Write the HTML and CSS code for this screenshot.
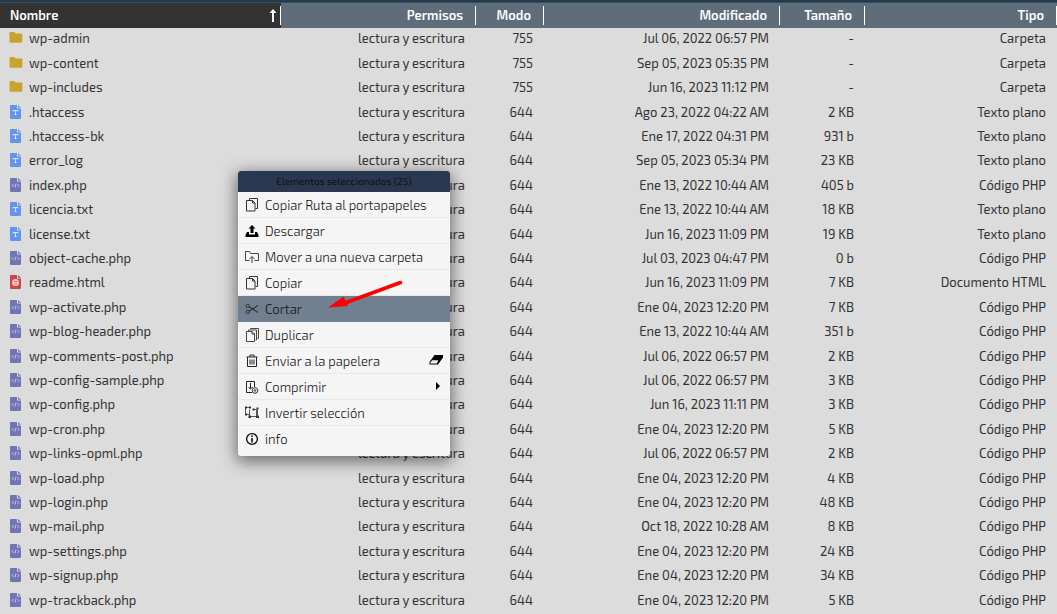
FILE: index.html
```html
<!DOCTYPE html>
<html lang="es">
<head>
<meta charset="utf-8">
<meta name="viewport" content="width=device-width, initial-scale=1">
<title>Administrador de archivos</title>
<link rel="stylesheet" href="styles.css">
</head>
<body>
<svg class="sprite" aria-hidden="true">
  <symbol id="folder" viewBox="0 0 14 14"><path fill="#c8a32e" d="M1.300 1h4l1.500 1.500h5.700q.8 0 .8.8V11q0 .8-.8.8H1.300q-.8 0-.8-.8V1.800q0-.8.8-.8z"/></symbol>
  <symbol id="text" viewBox="0 0 14 14"><path fill="#6495ed" d="M2 0h6v3.500h4V13q0 1-1 1H2q-1 0-1-1V1q0-1 1-1zM9 0l3 2.700H9z"/><path d="M4 6.500V5.500h5v1M6.500 5.500v4M5.500 9.500h2" fill="none" stroke="#dce8fb"/></symbol>
  <symbol id="code" viewBox="0 0 14 14"><path fill="#7175b5" d="M2 0h6v3.500h4V13q0 1-1 1H2q-1 0-1-1V1q0-1 1-1zM9 0l3 2.700H9z"/><path d="M4.500 6L3 7.500 4.500 9M8.500 6L10 7.500 8.500 9M7 5.500l-1 4" fill="none" stroke="#d3d4ea" stroke-width=".8"/></symbol>
  <symbol id="html" viewBox="0 0 14 14"><path fill="#c9474b" d="M2 0h6v3.500h4V13q0 1-1 1H2q-1 0-1-1V1q0-1 1-1zM9 0l3 2.700H9z"/><circle cx="6.500" cy="7.500" r="3.500" fill="#f1cfd0"/><path d="M4.500 6.500h4M5 9h3" fill="none" stroke="#c9474b" stroke-width=".7"/></symbol>
  <symbol id="copy" viewBox="0 0 14 14"><path d="M4.500 2V.5h8v10h-2M1.500 2.500h6l2.500 2.500v8h-8.500zM7.500 2.500V5H10" fill="none" stroke="#333"/></symbol>
  <symbol id="download" viewBox="0 0 14 14"><path d="M7 1l3.500 3.500h-2V9h-3V4.500h-2zM2 8h2v2.500h6V8h2l1.500 3v2H.5v-2z"/></symbol>
  <symbol id="move" viewBox="0 0 14 14"><path d="M4.500 10.500h-4v-9h4l1 2h8v7h-4M7 13V6.500M4.500 9L7 6.500 9.500 9" fill="none" stroke="#444"/></symbol>
  <symbol id="cut" viewBox="0 0 14 14"><g fill="none" stroke="#333"><circle cx="2.700" cy="4" r="1.700"/><circle cx="2.700" cy="10" r="1.700"/><path d="M4.200 4.800L13 10.500M4.200 9.200L13 3.500" stroke-width="1.200"/></g></symbol>
  <symbol id="duplicate" viewBox="0 0 14 14"><path d="M5.500 1V.5h8v10h-1M3.500 3V2h8v10h-1M1.500 3.500h5.500l2.500 2.500v7.500h-8zM7 3.500V6h2.500" fill="none" stroke="#333" stroke-width=".9"/></symbol>
  <symbol id="trash" viewBox="0 0 14 14"><path d="M1.500 3h11M5 3V1h4v2M2.500 3v9.500h9V3M5 5.500v5M7 5.500v5M9 5.500v5" fill="none" stroke="#222"/></symbol>
  <symbol id="compress" viewBox="0 0 14 14"><path d="M7 12.500H1.500V1.500h8V7M5.500 3v6M3.500 7l2 2 2-2" fill="none" stroke="#222"/><circle cx="10" cy="10.500" r="2.800" fill="#f5f5f5" stroke="#333"/><path d="M8.500 10.500h3M10 9v3" stroke="#333" stroke-width=".8"/></symbol>
  <symbol id="invert" viewBox="0 0 14 14"><path d="M.5 2v6.500H4M4.500 3.500v7h7v-7H9M12.500 3.500v6M1.500 1.500h3" fill="none" stroke="#444" stroke-width=".9"/><path d="M0 .5h2v2H0zM0 7.500h2v2H0zM4 .5h2v2H4zM7.500 2.500h2v2h-2zM11.500 1.500h2v2h-2zM11 9.500h3v2.500h-3zM3.500 9.500h2.500V12H3.500z" fill="#333"/></symbol>
  <symbol id="info" viewBox="0 0 14 14"><circle cx="7" cy="7" r="5.400" fill="none" stroke="#111" stroke-width="1.400"/><path d="M7 3.500v1.500M7 6v4.500" stroke="#111" stroke-width="1.600"/></symbol>
</svg>
<main class="manager">
  <table class="files">
    <colgroup><col class="col-name"><col class="col-perm"><col class="col-mode"><col class="col-date"><col class="col-size"><col></colgroup>
    <thead><tr>
      <th class="sorted" aria-sort="ascending"><button type="button">Nombre<svg class="sort" viewBox="0 0 8 14" aria-hidden="true"><path d="M4 0l3.500 4H5v9H3V4H.5z" fill="#fff"/></svg></button></th>
      <th><button type="button">Permisos</button></th><th><button type="button">Modo</button></th><th><button type="button">Modificado</button></th><th><button type="button">Tamaño</button></th><th><button type="button">Tipo</button></th>
    </tr></thead>
    <tbody>
      <tr><td><span class="file"><svg><use href="#folder"/></svg>wp-admin</span></td><td>lectura y escritura</td><td>755</td><td>Jul 06, 2022 06:57 PM</td><td>-</td><td>Carpeta</td></tr>
      <tr><td><span class="file"><svg><use href="#folder"/></svg>wp-content</span></td><td>lectura y escritura</td><td>755</td><td>Sep 05, 2023 05:35 PM</td><td>-</td><td>Carpeta</td></tr>
      <tr><td><span class="file"><svg><use href="#folder"/></svg>wp-includes</span></td><td>lectura y escritura</td><td>755</td><td>Jun 16, 2023 11:12 PM</td><td>-</td><td>Carpeta</td></tr>
      <tr><td><span class="file"><svg><use href="#text"/></svg>.htaccess</span></td><td>lectura y escritura</td><td>644</td><td>Ago 23, 2022 04:22 AM</td><td>2 KB</td><td>Texto plano</td></tr>
      <tr><td><span class="file"><svg><use href="#text"/></svg>.htaccess-bk</span></td><td>lectura y escritura</td><td>644</td><td>Ene 17, 2022 04:31 PM</td><td>931 b</td><td>Texto plano</td></tr>
      <tr><td><span class="file"><svg><use href="#text"/></svg>error_log</span></td><td>lectura y escritura</td><td>644</td><td>Sep 05, 2023 05:34 PM</td><td>23 KB</td><td>Texto plano</td></tr>
      <tr><td><span class="file"><svg><use href="#code"/></svg>index.php</span></td><td>lectura y escritura</td><td>644</td><td>Ene 13, 2022 10:44 AM</td><td>405 b</td><td>Código PHP</td></tr>
      <tr><td><span class="file"><svg><use href="#text"/></svg>licencia.txt</span></td><td>lectura y escritura</td><td>644</td><td>Ene 13, 2022 10:44 AM</td><td>18 KB</td><td>Texto plano</td></tr>
      <tr><td><span class="file"><svg><use href="#text"/></svg>license.txt</span></td><td>lectura y escritura</td><td>644</td><td>Jun 16, 2023 11:09 PM</td><td>19 KB</td><td>Texto plano</td></tr>
      <tr><td><span class="file"><svg><use href="#code"/></svg>object-cache.php</span></td><td>lectura y escritura</td><td>644</td><td>Jul 03, 2023 04:47 PM</td><td>0 b</td><td>Código PHP</td></tr>
      <tr><td><span class="file"><svg><use href="#html"/></svg>readme.html</span></td><td>lectura y escritura</td><td>644</td><td>Jun 16, 2023 11:09 PM</td><td>7 KB</td><td>Documento HTML</td></tr>
      <tr><td><span class="file"><svg><use href="#code"/></svg>wp-activate.php</span></td><td>lectura y escritura</td><td>644</td><td>Ene 04, 2023 12:20 PM</td><td>7 KB</td><td>Código PHP</td></tr>
      <tr><td><span class="file"><svg><use href="#code"/></svg>wp-blog-header.php</span></td><td>lectura y escritura</td><td>644</td><td>Ene 13, 2022 10:44 AM</td><td>351 b</td><td>Código PHP</td></tr>
      <tr><td><span class="file"><svg><use href="#code"/></svg>wp-comments-post.php</span></td><td>lectura y escritura</td><td>644</td><td>Jul 06, 2022 06:57 PM</td><td>2 KB</td><td>Código PHP</td></tr>
      <tr><td><span class="file"><svg><use href="#code"/></svg>wp-config-sample.php</span></td><td>lectura y escritura</td><td>644</td><td>Jul 06, 2022 06:57 PM</td><td>3 KB</td><td>Código PHP</td></tr>
      <tr><td><span class="file"><svg><use href="#code"/></svg>wp-config.php</span></td><td>lectura y escritura</td><td>644</td><td>Jun 16, 2023 11:11 PM</td><td>3 KB</td><td>Código PHP</td></tr>
      <tr><td><span class="file"><svg><use href="#code"/></svg>wp-cron.php</span></td><td>lectura y escritura</td><td>644</td><td>Ene 04, 2023 12:20 PM</td><td>5 KB</td><td>Código PHP</td></tr>
      <tr><td><span class="file"><svg><use href="#code"/></svg>wp-links-opml.php</span></td><td>lectura y escritura</td><td>644</td><td>Jul 06, 2022 06:57 PM</td><td>2 KB</td><td>Código PHP</td></tr>
      <tr><td><span class="file"><svg><use href="#code"/></svg>wp-load.php</span></td><td>lectura y escritura</td><td>644</td><td>Ene 04, 2023 12:20 PM</td><td>4 KB</td><td>Código PHP</td></tr>
      <tr><td><span class="file"><svg><use href="#code"/></svg>wp-login.php</span></td><td>lectura y escritura</td><td>644</td><td>Ene 04, 2023 12:20 PM</td><td>48 KB</td><td>Código PHP</td></tr>
      <tr><td><span class="file"><svg><use href="#code"/></svg>wp-mail.php</span></td><td>lectura y escritura</td><td>644</td><td>Oct 18, 2022 10:28 AM</td><td>8 KB</td><td>Código PHP</td></tr>
      <tr><td><span class="file"><svg><use href="#code"/></svg>wp-settings.php</span></td><td>lectura y escritura</td><td>644</td><td>Ene 04, 2023 12:20 PM</td><td>24 KB</td><td>Código PHP</td></tr>
      <tr><td><span class="file"><svg><use href="#code"/></svg>wp-signup.php</span></td><td>lectura y escritura</td><td>644</td><td>Ene 04, 2023 12:20 PM</td><td>34 KB</td><td>Código PHP</td></tr>
      <tr><td><span class="file"><svg><use href="#code"/></svg>wp-trackback.php</span></td><td>lectura y escritura</td><td>644</td><td>Ene 04, 2023 12:20 PM</td><td>5 KB</td><td>Código PHP</td></tr>
    </tbody>
  </table>
</main>
<div class="menu">
  <div class="menu-title">Elementos seleccionados (25)</div>
  <button type="button" class="item"><svg><use href="#copy"/></svg>Copiar Ruta al portapapeles</button>
  <button type="button" class="item"><svg><use href="#download"/></svg>Descargar</button>
  <button type="button" class="item"><svg><use href="#move"/></svg>Mover a una nueva carpeta</button>
  <button type="button" class="item"><svg><use href="#copy"/></svg>Copiar</button>
  <button type="button" class="item active"><svg><use href="#cut"/></svg>Cortar</button>
  <button type="button" class="item"><svg><use href="#duplicate"/></svg>Duplicar</button>
  <button type="button" class="item"><svg><use href="#trash"/></svg>Enviar a la papelera<svg class="trail" viewBox="0 0 14 14"><path d="M5.500 1H14v2.500L9 10.500H.5V8z"/><path d="M3.300 6.200h6L7.800 9.500H1.300V8.500z" fill="#f5f5f5"/></svg></button>
  <button type="button" class="item"><svg><use href="#compress"/></svg>Comprimir<svg class="trail" viewBox="0 0 14 14"><path d="M7 2l4 4-4 4z"/></svg></button>
  <button type="button" class="item"><svg><use href="#invert"/></svg>Invertir selección</button>
  <button type="button" class="item"><svg><use href="#info"/></svg>info</button>
</div>
<svg class="pointer" viewBox="0 0 76 28" aria-hidden="true"><path d="M72.500 2.500L17 23" stroke="#f00" stroke-width="3.600" stroke-linecap="round"/><path d="M0 27.500L15.500 16.500 17.500 20.500 20 26z" fill="#f00"/></svg>
</body>
</html>
```
FILE: styles.css
```css
* { box-sizing: border-box; }
body {
  margin: 0;
  background: #dcdcdc;
  color: #333;
  font: 13px/20px "Exo 2", Roboto, "Noto Sans", sans-serif;
}
button { border: 0; padding: 0; background: none; color: inherit; font: inherit; }
.sprite { position: absolute; width: 0; height: 0; }
.manager { border-top: 2px solid #2a3750; }
.files {
  width: 100%;
  border-top: 1px solid #2b5654;
  border-spacing: 0;
  table-layout: fixed;
}
.col-name { width: 281px; }
.col-perm { width: 195px; }
.col-mode { width: 68px; }
.col-date { width: 236px; }
.col-size { width: 85px; }
th { padding: 3px 0; background: #5f6d7b; color: #fff; }
th button {
  display: block;
  width: 100%;
  height: 19px;
  padding-right: 12px;
  border-right: 1px solid #fff;
  font-weight: 600;
  line-height: 19px;
  text-align: right;
}
th.sorted { background: #333; }
th.sorted button {
  display: flex;
  align-items: center;
  justify-content: space-between;
  padding: 0 3px 0 10px;
}
.sort { width: 8px; height: 14px; }
td {
  height: 24px;
  padding: 0 11px 4px 0;
  text-align: right;
  white-space: nowrap;
}
tr:nth-child(5n + 2) td, tr:nth-child(5n + 4) td { height: 25px; }
td:first-child { padding-left: 9px; text-align: left; }
.file { display: flex; align-items: center; gap: 6px; }
.file svg { width: 14px; height: 14px; }
.menu {
  position: absolute;
  left: 238px;
  top: 171px;
  width: 212px;
  padding-bottom: 4px;
  overflow: hidden;
  border-radius: 3px;
  background: #f5f5f5;
  box-shadow: 0 4px 16px 2px rgba(0, 0, 0, .5);
}
.menu-title {
  background: #2a3750;
  color: #111;
  font-size: 10px;
  line-height: 21px;
  text-align: center;
}
.item {
  display: flex;
  align-items: center;
  gap: 6px;
  width: 100%;
  height: 26px;
  padding: 0 7px;
  border-bottom: 1px solid #e8e8e8;
  color: #111;
  font-weight: 300;
  text-align: left;
}
.item:last-child { border-bottom: 0; }
.item svg { width: 14px; height: 14px; }
.item .trail { margin-left: auto; }
.item.active { background: #708090; border-color: #708090; }
.pointer { position: absolute; left: 328px; top: 280px; width: 76px; height: 28px; }
```
